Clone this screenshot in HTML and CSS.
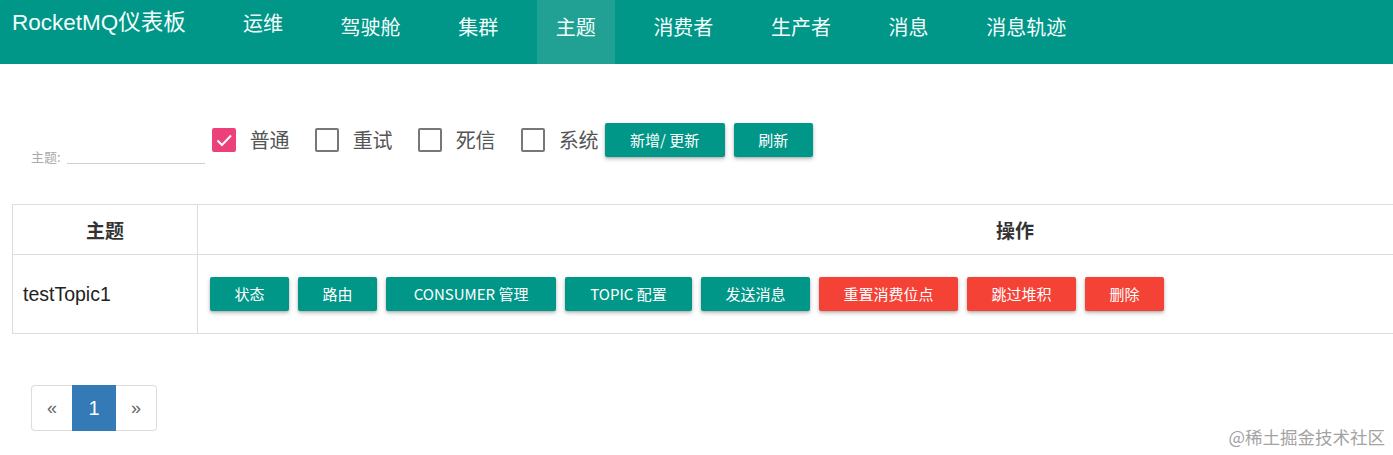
FILE: index.html
```html
<!DOCTYPE html>
<html>
<head>
<meta charset="utf-8">
<link rel="stylesheet" href="styles.css">
</head>
<body>
<nav class="navbar">
  <div class="brand">RocketMQ仪表板</div>
  <ul class="nav">
    <li class="nav-item up">运维</li>
    <li class="nav-item">驾驶舱</li>
    <li class="nav-item">集群</li>
    <li class="nav-item active">主题</li>
    <li class="nav-item">消费者</li>
    <li class="nav-item">生产者</li>
    <li class="nav-item">消息</li>
    <li class="nav-item">消息轨迹</li>
  </ul>
</nav>
<main class="content">
  <div class="filters">
    <div class="field">
      <span class="field-label">主题:</span>
      <span class="field-input"></span>
    </div>
    <label class="check"><span class="box checked"><svg viewBox="0 0 24 24" width="24" height="24"><path d="M5.5 12.5 L10 17 L19 7.5" fill="none" stroke="#fff" stroke-width="2"/></svg></span><span class="check-text">普通</span></label>
    <label class="check"><span class="box"></span><span class="check-text">重试</span></label>
    <label class="check"><span class="box"></span><span class="check-text">死信</span></label>
    <label class="check last"><span class="box"></span><span class="check-text">系统</span></label>
    <button class="btn btn-wide">新增/ 更新</button>
    <button class="btn">刷新</button>
  </div>

  <table class="table">
    <thead>
      <tr><th class="col-topic">主题</th><th>操作</th></tr>
    </thead>
    <tbody>
      <tr>
        <td class="topic-name">testTopic1</td>
        <td>
          <div class="actions">
            <button class="btn">状态</button>
            <button class="btn">路由</button>
            <button class="btn btn-consumer">CONSUMER 管理</button>
            <button class="btn btn-topic">TOPIC 配置</button>
            <button class="btn">发送消息</button>
            <button class="btn btn-red">重置消费位点</button>
            <button class="btn btn-red">跳过堆积</button>
            <button class="btn btn-red">删除</button>
          </div>
        </td>
      </tr>
    </tbody>
  </table>

  <ul class="pagination">
    <li class="page">«</li>
    <li class="page current">1</li>
    <li class="page">»</li>
  </ul>
</main>
<div class="watermark">@稀土掘金技术社区</div>
</body>
</html>
```

FILE: styles.css
```css
* { box-sizing: border-box; }
html, body {
  margin: 0;
  padding: 0;
  overflow: hidden;
  height: 455px;
  background: #fff;
  font-family: "Noto Sans CJK SC", "Liberation Sans", sans-serif;
}
body { position: relative; width: 1393px; }

.navbar {
  height: 64px;
  background: #009688;
  display: flex;
  align-items: flex-start;
  color: #f4fffd;
}
.brand {
  font-family: "Liberation Sans", "Noto Sans CJK SC", sans-serif;
  font-size: 22.5px;
  letter-spacing: 0;
  padding: 10px 0 0 12px;
  line-height: 26px;
  width: 224px;
}
.nav {
  list-style: none;
  margin: 0;
  padding: 0;
  display: flex;
  gap: 19.6px;
}
.nav-item {
  height: 64px;
  padding: 13px 19px 0;
  font-size: 20px;
  line-height: 28px;
}
.nav-item.up { padding-top: 9px; }
.nav-item.active { background: #21a194; }

.content { padding: 0 0 0 12px; }

.filters {
  display: flex;
  align-items: center;
  padding-top: 59px;
  height: 93px;
}
.field {
  display: flex;
  align-items: flex-end;
  padding-left: 19px;
  margin-right: 7px;
  height: 34px;
  margin-top: 20px;
}
.field-label {
  font-size: 13px;
  color: #aaa;
  line-height: 14px;
  padding-bottom: 3px;
  margin-right: 6px;
}
.field-input {
  display: block;
  width: 138px;
  height: 1px;
  background: #cfcfcf;
  margin-bottom: 3px;
}
.check {
  display: flex;
  align-items: center;
  margin-right: 25px;
}
.check.last { margin-right: 6px; }
.box {
  width: 24px;
  height: 24px;
  border: 2px solid #777;
  border-radius: 2px;
  display: block;
}
.box.checked {
  border: none;
  background: #ec407a;
}
.box svg { display: block; }
.check-text {
  font-size: 20px;
  color: #555;
  margin-left: 14px;
  line-height: 28px;
}

.btn {
  font-family: "Noto Sans CJK SC", "Liberation Sans", sans-serif;
  background: #009688;
  color: #fff;
  border: none;
  border-radius: 2px;
  height: 34px;
  padding: 0 24.5px;
  font-size: 15px;
  line-height: 34px;
  margin-right: 9px;
  box-shadow: 0 2px 4px rgba(0,0,0,0.25), 0 1px 2px rgba(0,0,0,0.12);
  white-space: nowrap;
  cursor: pointer;
}
.btn-wide { width: 120px; padding: 0; }
.btn-red { background: #f44336; }
.btn-consumer { width: 170px; padding: 0; }
.btn-topic { width: 127px; padding: 0; }

.table {
  border-collapse: collapse;
  width: 1821px;
  margin-top: 47px;
}
.table th, .table td {
  border: 1px solid #ddd;
}
.table th {
  height: 50px;
  font-size: 19px;
  font-weight: bold;
  color: #333;
  text-align: center;
}
.col-topic { width: 185px; }
.table td { height: 79px; }
.topic-name {
  font-family: "Liberation Sans", sans-serif;
  font-size: 19.5px;
  color: #222;
  padding: 0 10px;
}
.actions {
  display: flex;
  padding-left: 11px;
}

.pagination {
  list-style: none;
  margin: 51px 0 0 19px;
  padding: 0;
  display: flex;
}
.page {
  height: 46px;
  width: 41px;
  border: 1px solid #ddd;
  font-family: "Liberation Sans", sans-serif;
  font-size: 18px;
  color: #666;
  display: flex;
  align-items: center;
  justify-content: center;
}
.page:first-child { border-radius: 4px 0 0 4px; border-right: none; }
.page:last-child { border-radius: 0 4px 4px 0; border-left: none; width: 41px; }
.page.current {
  background: #337ab7;
  border-color: #337ab7;
  color: #fff;
  width: 44px;
  font-size: 20px;
}

.watermark {
  position: absolute;
  right: 8px;
  bottom: 6px;
  font-size: 17.5px;
  color: #a3a3a3;
}
```
